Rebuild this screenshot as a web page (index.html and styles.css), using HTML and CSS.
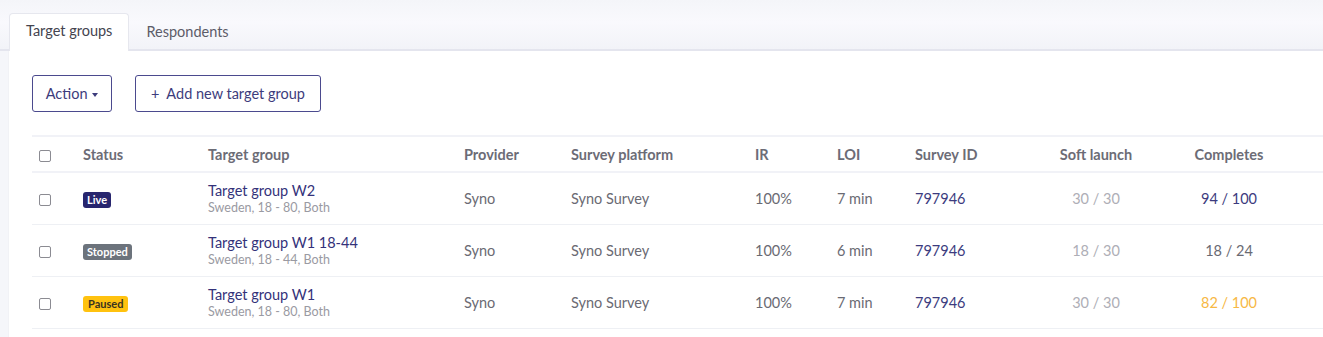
FILE: index.html
```html
<!DOCTYPE html>
<html lang="en">
<head>
    <meta charset="UTF-8">
    <title>Target groups</title>
    <link rel="stylesheet" href="styles.css">
</head>
<body>
    <nav class="tabs">
        <a class="tab active">Target groups</a>
        <a class="tab">Respondents</a>
    </nav>

    <main class="panel">
        <div class="toolbar">
            <button class="btn">Action <span class="caret"></span></button>
            <button class="btn">+&nbsp; Add new target group</button>
        </div>

        <table class="groups">
            <colgroup>
                <col class="c-check">
                <col class="c-status">
                <col class="c-group">
                <col class="c-provider">
                <col class="c-platform">
                <col class="c-ir">
                <col class="c-loi">
                <col class="c-id">
                <col class="c-soft">
                <col class="c-done">
                <col>
            </colgroup>
            <thead>
                <tr>
                    <th><input type="checkbox"></th>
                    <th>Status</th>
                    <th>Target group</th>
                    <th>Provider</th>
                    <th>Survey platform</th>
                    <th>IR</th>
                    <th>LOI</th>
                    <th>Survey ID</th>
                    <th class="center">Soft launch</th>
                    <th class="center">Completes</th>
                    <th></th>
                </tr>
            </thead>
            <tbody>
                <tr>
                    <td><input type="checkbox"></td>
                    <td><span class="badge live">Live</span></td>
                    <td>
                        <div class="name">Target group W2</div>
                        <div class="meta">Sweden, 18 - 80, Both</div>
                    </td>
                    <td>Syno</td>
                    <td>Syno Survey</td>
                    <td>100%</td>
                    <td>7 min</td>
                    <td class="sid">797946</td>
                    <td class="center soft">30 / 30</td>
                    <td class="center done-live">94 / 100</td>
                    <td></td>
                </tr>
                <tr>
                    <td><input type="checkbox"></td>
                    <td><span class="badge stopped">Stopped</span></td>
                    <td>
                        <div class="name">Target group W1 18-44</div>
                        <div class="meta">Sweden, 18 - 44, Both</div>
                    </td>
                    <td>Syno</td>
                    <td>Syno Survey</td>
                    <td>100%</td>
                    <td>6 min</td>
                    <td class="sid">797946</td>
                    <td class="center soft">18 / 30</td>
                    <td class="center">18 / 24</td>
                    <td></td>
                </tr>
                <tr>
                    <td><input type="checkbox"></td>
                    <td><span class="badge paused">Paused</span></td>
                    <td>
                        <div class="name">Target group W1</div>
                        <div class="meta">Sweden, 18 - 80, Both</div>
                    </td>
                    <td>Syno</td>
                    <td>Syno Survey</td>
                    <td>100%</td>
                    <td>7 min</td>
                    <td class="sid">797946</td>
                    <td class="center soft">30 / 30</td>
                    <td class="center done-paused">82 / 100</td>
                    <td></td>
                </tr>
            </tbody>
        </table>
    </main>
</body>
</html>
```

FILE: styles.css
```css
body {
    font-family: 'Lato', 'Noto Sans', sans-serif;
    font-size: 14.5px;
    color: #6a6a73;
    background-color: #f5f6fa;
    margin: 0;
    padding: 0;
}

/* Tabs */
.tabs {
    display: flex;
    align-items: flex-end;
    height: 51px;
    padding-left: 9px;
    box-sizing: border-box;
    background: linear-gradient(#f4f5f9, #f9f9fd 45%, #f2f3f8);
    border-bottom: 2px solid #e4e5ee;
}

.tab {
    padding: 9px 16px 11px;
    margin-bottom: -2px;
    color: #5c5c68;
    border: 1px solid transparent;
    border-bottom: none;
    border-radius: 4px 4px 0 0;
    line-height: 16px;
}

.tab.active {
    background-color: #fff;
    border-color: #e6e7ee;
    color: #44444f;
    padding-bottom: 12px;
}

/* Main panel */
.panel {
    margin-left: 8px;
    background-color: #fff;
    padding: 24px 0 10px 23px;
    border-left: 1px solid #f1f2f6;
    min-height: 262px;
    box-sizing: border-box;
}

.toolbar {
    display: flex;
    gap: 23px;
    margin-bottom: 23px;
}

.btn {
    font-family: inherit;
    font-size: 14.5px;
    height: 37px;
    padding: 0 15px;
    background-color: #fff;
    color: #3d3c7c;
    border: 1px solid #4b4a8e;
    border-radius: 3px;
}

.btn:first-child {
    width: 80px;
    padding: 0;
}

.caret {
    display: inline-block;
    vertical-align: middle;
    border-top: 4px solid #3d3c7c;
    border-left: 3px solid transparent;
    border-right: 3px solid transparent;
    margin-left: 1px;
}

/* Table */
.groups {
    width: 100%;
    table-layout: fixed;
    border-collapse: collapse;
}

.c-check { width: 51px; }
.c-status { width: 125px; }
.c-group { width: 256px; }
.c-provider { width: 107px; }
.c-platform { width: 184px; }
.c-ir { width: 82px; }
.c-loi { width: 78px; }
.c-id { width: 125px; }
.c-soft { width: 112px; }
.c-done { width: 154px; }

.groups th {
    text-align: left;
    font-weight: 700;
    color: #6c6c76;
    height: 34px;
    padding: 0;
    border-top: 2px solid #f1f2f7;
    border-bottom: 2px solid #f1f2f7;
}

.groups td {
    height: 51px;
    padding: 0;
    border-bottom: 1px solid #eef0f4;
    vertical-align: middle;
}

.groups .center {
    text-align: center;
}

input[type="checkbox"] {
    appearance: none;
    width: 12px;
    height: 12px;
    margin: 0 0 0 7px;
    border: 1px solid #8b8b92;
    border-radius: 2px;
    vertical-align: middle;
}

.badge {
    display: inline-block;
    font-size: 11px;
    font-weight: 700;
    line-height: 14px;
    padding: 1px 4px;
    border-radius: 3px;
}

.badge.live {
    background-color: #27256e;
    color: #fff;
}

.badge.stopped {
    background-color: #6c737c;
    color: #fff;
}

.badge.paused {
    background-color: #ffc20f;
    color: #3a3320;
    padding: 1px 5px;
}

.name {
    color: #34327a;
    line-height: 18px;
}

.meta {
    font-size: 12.5px;
    color: #9a9aa2;
    line-height: 16px;
}

.sid {
    color: #3c3b7e;
}

.soft {
    color: #aeaeb6;
}

.done-live {
    color: #3c3b7e;
}

.done-paused {
    color: #f7b844;
}
```
